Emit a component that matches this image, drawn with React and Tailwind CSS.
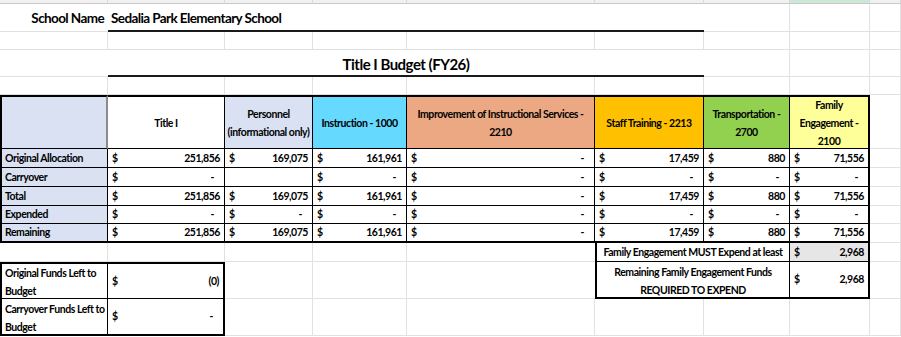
import React from 'react';

const grid = 'border-r border-b border-[#e1e1e1]';
const font = { fontFamily: 'Lato, "Open Sans", Arial, sans-serif' };

const columns = [
  { name: 'Title I', bg: 'bg-white' },
  { name: <>Personnel<br />(informational only)</>, bg: 'bg-[#d9e1f2]' },
  { name: 'Instruction - 1000', bg: 'bg-[#66d9ff]' },
  { name: <>Improvement of Instructional Services -<br />2210</>, bg: 'bg-[#eba882]' },
  { name: 'Staff Training - 2213', bg: 'bg-[#ffc000]' },
  { name: <>Transportation -<br />2700</>, bg: 'bg-[#92d050]' },
  { name: <>Family<br />Engagement -<br />2100</>, bg: 'bg-[#ffff99]' },
];

const rows = [
  { label: 'Original Allocation', values: ['251,856', '169,075', '161,961', '-', '17,459', '880', '71,556'] },
  { label: 'Carryover', values: ['-', null, '-', '-', '-', '-', '-'] },
  { label: 'Total', values: ['251,856', '169,075', '161,961', '-', '17,459', '880', '71,556'] },
  { label: 'Expended', values: ['-', '-', '-', '-', '-', '-', '-'] },
  { label: 'Remaining', values: ['251,856', '169,075', '161,961', '-', '17,459', '880', '71,556'] },
];

function Empty({ className = '' }) {
  return <div className={`${grid} ${className}`} />;
}

function Money({ value, className = '' }) {
  return (
    <div className={`flex items-center justify-between pl-[4px] pr-[4px] pt-[1px] ${className}`}>
      {value !== null && <span>$</span>}
      {value !== null && <span className={value === '-' ? 'mr-[6px]' : ''}>{value}</span>}
    </div>
  );
}

export default function App() {
  return (
    <div style={font} className="w-[901px] h-[337px] overflow-hidden bg-white text-black text-[10.5px] font-bold tracking-[-0.45px] whitespace-nowrap">
      <div className="grid grid-cols-[108px_117px_88px_94px_188px_109px_86px_80px_31px] grid-rows-[4px_28px_18px_27px_18px_54px_19px_19px_19px_18px_19px_19px_37px_37px_1px]">
        {/* sheet header strip */}
        {[...Array(9)].map((_, i) => (
          <div key={`h${i}`} className={`border-r border-b border-r-[#d9d9d9] border-b-[#c9c9c9] ${i === 7 ? 'bg-[#cbe8d6]' : 'bg-[#f1f1f1]'}`} />
        ))}

        {/* school name */}
        <div className="flex items-center justify-end pr-[4px] pt-[2px] text-[13.5px] tracking-[-0.6px] border-b border-[#e1e1e1]">School Name</div>
        <div className="col-span-5 flex items-center pl-[3px] pt-[2px] text-[13.5px] tracking-[-0.6px] border-b-2 border-[#1a1a1a]">Sedalia Park Elementary School</div>
        <Empty /><Empty /><Empty />

        {[...Array(9)].map((_, i) => <Empty key={`a${i}`} />)}

        {/* title */}
        <div className="border-b border-[#e1e1e1]" />
        <div className="col-span-5 flex items-center justify-center pt-[4px] text-[15px] tracking-[-0.5px] border-b-2 border-[#1a1a1a]">Title I Budget (FY26)</div>
        <Empty /><Empty /><Empty />

        {[...Array(9)].map((_, i) => <Empty key={`b${i}`} />)}

        {/* column headers */}
        <div className="bg-[#d9e1f2] border-t-2 border-l-2 border-r-2 border-b border-black border-r-[#8a8a8a]" />
        {columns.map((c, i) => (
          <div
            key={`c${i}`}
            className={`flex items-center justify-center text-center leading-[18px] border-t-2 border-b border-black ${c.bg} ${i === 6 ? 'border-r-2' : 'border-r'}`}
          >
            <span>{c.name}</span>
          </div>
        ))}
        <Empty />

        {/* data rows */}
        {rows.map((r, ri) => (
          <React.Fragment key={r.label}>
            <div className={`flex items-center pl-[3px] pt-[1px] bg-[#d9e1f2] border-l-2 border-r border-black ${ri === 4 ? 'border-b-2' : 'border-b'}`}>
              {r.label}
            </div>
            {r.values.map((v, vi) => (
              <Money
                key={vi}
                value={v}
                className={`border-black ${vi === 6 ? 'border-r-2' : 'border-r'} ${ri === 4 ? 'border-b-2' : 'border-b'}`}
              />
            ))}
            <Empty />
          </React.Fragment>
        ))}

        {/* family engagement minimum */}
        <Empty /><Empty /><Empty /><Empty /><Empty className="border-r-0" />
        <div className="col-span-2 flex items-center justify-center pt-[1px] border-l-2 border-r border-b border-black">
          Family Engagement MUST Expend at least
        </div>
        <Money value="2,968" className="bg-[#e6e6e6] border-r-2 border-b border-black" />
        <Empty />

        {/* left box + remaining funds */}
        <div className="flex flex-col justify-center pl-[3px] pt-[2px] leading-[18px] border-l-2 border-t-2 border-r border-b border-black">
          <span>Original Funds Left to</span>
          <span>Budget</span>
        </div>
        <Money value="(0)" className="border-t-2 border-r-2 border-b border-black" />
        <Empty /><Empty /><Empty className="border-r-0" />
        <div className="col-span-2 flex flex-col items-center justify-center pt-[2px] leading-[18px] border-l-2 border-r border-b-2 border-black">
          <span>Remaining Family Engagement Funds</span>
          <span>REQUIRED TO EXPEND</span>
        </div>
        <Money value="2,968" className="border-r-2 border-b-2 border-black" />
        <Empty />

        <div className="flex flex-col justify-center pl-[3px] pt-[2px] leading-[18px] border-l-2 border-r border-b-2 border-black">
          <span>Carryover Funds Left to</span>
          <span>Budget</span>
        </div>
        <Money value="-" className="border-r-2 border-b-2 border-black" />
        {[...Array(7)].map((_, i) => <Empty key={`d${i}`} />)}

        <div className="col-span-9" />
      </div>
    </div>
  );
}
